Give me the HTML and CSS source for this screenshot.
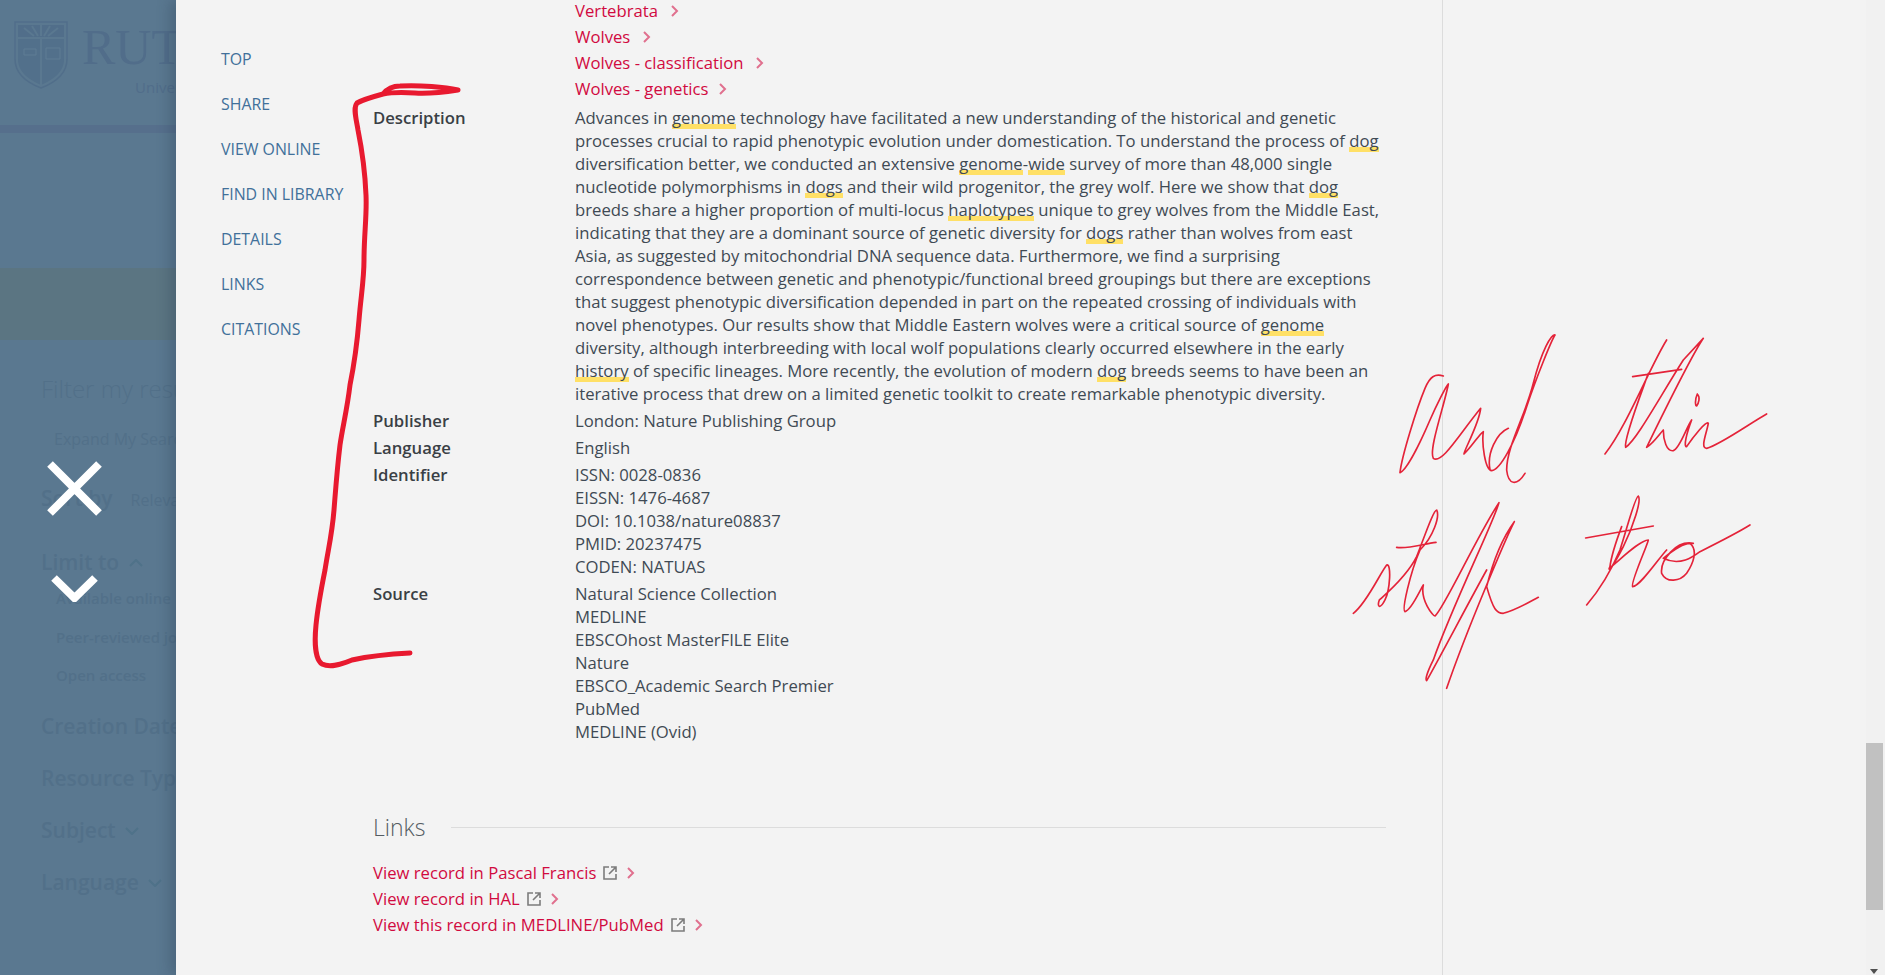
FILE: index.html
```html
<!DOCTYPE html>
<html lang="en">
<head>
    <meta charset="UTF-8">
    <meta name="viewport" content="width=device-width, initial-scale=1.0">
    <title>Record details</title>
    <link rel="stylesheet" href="styles.css">
</head>
<body>

<div class="page">
    <!-- dimmed results page behind the panel -->
    <div class="backdrop">
        <div class="brand">
            <svg class="shield" viewBox="0 0 54 68" width="54" height="68">
                <path d="M1 1H53V38C53 54 40 62 27 67C14 62 1 54 1 38Z" fill="none" stroke="#516e8a" stroke-width="1.5"/>
                <path d="M4 4H50V16H4Z" fill="#516e8a"/>
                <path d="M4 18H50V38C50 52 38 59 27 64C16 59 4 52 4 38Z" fill="#52708b"/>
                <path d="M27 18V64" stroke="#5a7890" stroke-width="2"/>
                <path d="M10 7L20 15M18 5L24 15M27 4V15M36 5L30 15M44 7L34 15" stroke="#5a7890" stroke-width="2"/>
                <path d="M10 28H22V34H10ZM32 27H46V38H32Z" fill="none" stroke="#5f7d94"/>
            </svg>
            <div class="brand-text">
                <div class="brand-name">Rutgers</div>
                <div class="brand-sub">University Libraries</div>
            </div>
        </div>
        <div class="band"></div>
        <div class="hero"></div>
        <div class="filters">
            <div class="filter-title">Filter my results</div>
            <div class="filter-expand"><span class="toggle"></span>Expand My Search</div>
            <div class="filter-sort"><b>Sort by</b><span>Relevance</span></div>
            <div class="filter-head limit">Limit to
                <svg viewBox="0 0 14 8" width="14" height="8"><path d="M1 7L7 1L13 7" fill="none" stroke="#4f7289" stroke-width="2"/></svg>
            </div>
            <div class="filter-item">Available online</div>
            <div class="filter-item">Peer-reviewed journals</div>
            <div class="filter-item">Open access</div>
            <div class="filter-head first">Creation Date</div>
            <div class="filter-head">Resource Type</div>
            <div class="filter-head">Subject
                <svg viewBox="0 0 14 8" width="14" height="8"><path d="M1 1L7 7L13 1" fill="none" stroke="#4f7289" stroke-width="2"/></svg>
            </div>
            <div class="filter-head">Language
                <svg viewBox="0 0 14 8" width="14" height="8"><path d="M1 1L7 7L13 1" fill="none" stroke="#4f7289" stroke-width="2"/></svg>
            </div>
        </div>
    </div>

    <div class="panel">
        <nav class="side-nav">
            <a href="#">TOP</a>
            <a href="#">SHARE</a>
            <a href="#">VIEW ONLINE</a>
            <a href="#">FIND IN LIBRARY</a>
            <a href="#">DETAILS</a>
            <a href="#">LINKS</a>
            <a href="#">CITATIONS</a>
        </nav>

        <main class="record">
            <div class="row subjects">
                <div class="label"></div>
                <div class="links">
                    <a href="#">Vertebrata<svg class="chev gap" viewBox="0 0 9 12"><path d="M2 1L7 6L2 11"/></svg></a>
                    <a href="#">Wolves<svg class="chev gap" viewBox="0 0 9 12"><path d="M2 1L7 6L2 11"/></svg></a>
                    <a href="#">Wolves - classification<svg class="chev gap" viewBox="0 0 9 12"><path d="M2 1L7 6L2 11"/></svg></a>
                    <a href="#">Wolves - genetics<svg class="chev" viewBox="0 0 9 12"><path d="M2 1L7 6L2 11"/></svg></a>
                </div>
            </div>

            <div class="row">
                <div class="label">Description</div>
                <div class="lines">
                    <span>Advances in <mark>genome</mark> technology have facilitated a new understanding of the historical and genetic</span>
                    <span>processes crucial to rapid phenotypic evolution under domestication. To understand the process of <mark>dog</mark></span>
                    <span>diversification better, we conducted an extensive <mark>genome</mark>-<mark>wide</mark> survey of more than 48,000 single</span>
                    <span>nucleotide polymorphisms in <mark>dogs</mark> and their wild progenitor, the grey wolf. Here we show that <mark>dog</mark></span>
                    <span>breeds share a higher proportion of multi-locus <mark>haplotypes</mark> unique to grey wolves from the Middle East,</span>
                    <span>indicating that they are a dominant source of genetic diversity for <mark>dogs</mark> rather than wolves from east</span>
                    <span>Asia, as suggested by mitochondrial DNA sequence data. Furthermore, we find a surprising</span>
                    <span>correspondence between genetic and phenotypic/functional breed groupings but there are exceptions</span>
                    <span>that suggest phenotypic diversification depended in part on the repeated crossing of individuals with</span>
                    <span>novel phenotypes. Our results show that Middle Eastern wolves were a critical source of <mark>genome</mark></span>
                    <span>diversity, although interbreeding with local wolf populations clearly occurred elsewhere in the early</span>
                    <span><mark>history</mark> of specific lineages. More recently, the evolution of modern <mark>dog</mark> breeds seems to have been an</span>
                    <span>iterative process that drew on a limited genetic toolkit to create remarkable phenotypic diversity.</span>
                </div>
            </div>

            <div class="row">
                <div class="label">Publisher</div>
                <div class="lines"><span>London: Nature Publishing Group</span></div>
            </div>
            <div class="row">
                <div class="label">Language</div>
                <div class="lines"><span>English</span></div>
            </div>
            <div class="row">
                <div class="label">Identifier</div>
                <div class="lines">
                    <span>ISSN: 0028-0836</span>
                    <span>EISSN: 1476-4687</span>
                    <span>DOI: 10.1038/nature08837</span>
                    <span>PMID: 20237475</span>
                    <span>CODEN: NATUAS</span>
                </div>
            </div>
            <div class="row">
                <div class="label">Source</div>
                <div class="lines">
                    <span>Natural Science Collection</span>
                    <span>MEDLINE</span>
                    <span>EBSCOhost MasterFILE Elite</span>
                    <span>Nature</span>
                    <span>EBSCO_Academic Search Premier</span>
                    <span>PubMed</span>
                    <span>MEDLINE (Ovid)</span>
                </div>
            </div>

            <div class="section-head">
                <h2>Links</h2>
                <div class="section-rule"></div>
            </div>
            <div class="links">
                <a href="#">View record in Pascal Francis<svg class="ext" viewBox="0 0 14 14"><path d="M6 1H1V13H13V8M8 1H13V6M13 1L6 8"/></svg><svg class="chev" viewBox="0 0 9 12"><path d="M2 1L7 6L2 11"/></svg></a>
                <a href="#">View record in HAL<svg class="ext" viewBox="0 0 14 14"><path d="M6 1H1V13H13V8M8 1H13V6M13 1L6 8"/></svg><svg class="chev" viewBox="0 0 9 12"><path d="M2 1L7 6L2 11"/></svg></a>
                <a href="#">View this record in MEDLINE/PubMed<svg class="ext" viewBox="0 0 14 14"><path d="M6 1H1V13H13V8M8 1H13V6M13 1L6 8"/></svg><svg class="chev" viewBox="0 0 9 12"><path d="M2 1L7 6L2 11"/></svg></a>
            </div>
        </main>

        <div class="margin-col"></div>

        <div class="scrollbar">
            <div class="scroll-thumb"></div>
            <div class="scroll-arrow"></div>
        </div>
    </div>

    <!-- close and next buttons sit on the dimmed area -->
    <div class="overlay-btns">
        <svg viewBox="0 0 55 55" width="55" height="55"><path d="M3 3L52 52M52 3L3 52" stroke="#fff" stroke-width="8" fill="none"/></svg>
        <svg class="next" viewBox="0 0 47 27" width="47" height="27"><path d="M3 3L23.5 23L44 3" stroke="#fff" stroke-width="8" fill="none"/></svg>
    </div>

    <!-- pen marks drawn over the page -->
    <svg class="ink" viewBox="0 0 1885 975" width="1885" height="975">
        <path class="bracket" d="M458 90C445 92 432 94 415 93C400 92 388 93 383 94C387 89 392 86 400 86C420 85 445 87 458 90M383 94C372 97 362 100 357 103C353 108 356 118 358 130C362 150 365 170 366 195C367 215 364 235 364 260C364 280 361 295 359 320C357 345 354 365 350 385C347 410 343 425 340 445C337 470 336 485 334 510C332 535 328 550 325 570C321 590 318 605 316 625C314 645 316 660 322 664C330 668 340 665 352 660C370 656 390 654 410 653"/>
        <g class="pen" transform="translate(1320 310) scale(0.3333)">
            <path d="M370 198C345 190 330 200 315 235C290 295 245 440 240 488C260 480 300 400 330 330C350 285 380 225 385 222C375 280 325 420 340 445C365 465 420 370 482 295C478 340 430 425 432 432C455 410 480 370 490 365C485 400 495 480 515 482C540 480 585 400 620 290C650 200 695 90 705 75C695 70 665 120 640 220C615 320 560 410 560 480C565 525 590 530 615 490M565 355C530 370 500 430 510 478"/>
            <path d="M1040 90C990 170 920 350 855 432M938 200L1085 178M985 190C960 260 910 390 917 412C950 390 1020 260 1090 150L1150 85C1120 130 1020 330 980 412C1000 400 1020 370 1030 360C1030 390 1040 425 1060 422C1080 415 1100 350 1115 330C1100 370 1090 410 1100 410C1120 380 1160 330 1165 340C1160 370 1140 415 1160 415C1200 405 1290 340 1340 312M1132 252C1124 270 1126 288 1130 288C1136 280 1142 262 1132 252"/>
            <path d="M100 910C140 880 180 790 200 765C215 760 210 840 195 870C180 900 170 890 178 870C200 850 260 800 290 740C310 690 340 600 350 600C360 620 340 680 300 720C270 790 245 900 255 905C275 900 300 840 310 825C300 870 340 920 345 918C370 900 470 680 537 578C520 640 400 880 340 1050C320 1090 315 1110 320 1112C350 1060 450 870 500 780M583 635C560 680 440 960 380 1135M583 635C550 680 520 750 500 830C520 900 530 910 550 910C590 900 630 875 655 862M230 712C260 718 310 702 348 697"/>
            <path d="M800 885C830 850 870 790 900 720C920 660 945 560 955 558C965 570 940 650 910 710C880 770 860 790 870 770C875 730 890 690 905 650M797 684L1000 648M868 775C900 750 960 690 985 690C985 700 930 820 938 830C960 830 1020 740 1040 720M1120 700C1070 690 1020 750 1025 790C1040 820 1080 815 1100 790C1120 760 1135 720 1110 700C1090 700 1060 720 1030 745C1080 770 1120 740 1140 725C1190 700 1250 670 1290 645"/>
        </g>
    </svg>
</div>

</body>
</html>
```

FILE: styles.css
```css
html, body {
    margin: 0;
    height: 975px;
    overflow: hidden;
}
body {
    font-family: "Open Sans", "Noto Sans", sans-serif;
    font-size: 16px;
    color: #3f4a54;
    background-color: #f3f3f3;
}
a {
    color: inherit;
    text-decoration: none;
}
.page {
    position: relative;
    display: flex;
    width: 1885px;
    height: 975px;
    overflow: hidden;
}

/* dimmed page */
.backdrop {
    width: 176px;
    flex: none;
    overflow: hidden;
    background-color: #5a7890;
    color: #527089;
    white-space: nowrap;
}
.brand {
    display: flex;
    gap: 14px;
    height: 125px;
    box-sizing: border-box;
    padding: 21px 0 0 14px;
}
.shield {
    flex: none;
}
.brand-name {
    font-family: "Liberation Serif", serif;
    font-size: 50px;
    line-height: 52px;
    text-transform: uppercase;
    color: #516d8a;
}
.brand-sub {
    margin-top: 4px;
    padding-left: 53px;
    font-size: 15px;
    color: #516d8a;
}
.band {
    height: 8px;
    background-color: #566f8c;
}
.hero {
    height: 135px;
}
.hero + .filters {
    border-top: 72px solid #5b7582;
}
.filters {
    padding: 29px 0 0 41px;
}
.filter-title {
    font-size: 24px;
    line-height: 40px;
    font-weight: 300;
}
.filter-expand {
    display: flex;
    align-items: center;
    gap: 16px;
    height: 30px;
    margin-top: 15px;
}
.toggle {
    width: 24px;
    height: 18px;
    margin-left: -3px;
    border-radius: 9px;
    background-color: #57758d;
}
.filter-sort {
    display: flex;
    align-items: baseline;
    gap: 18px;
    height: 34px;
    margin-top: 30px;
    font-size: 16px;
}
.filter-sort b {
    font-size: 21px;
    font-weight: 600;
}
.filter-head {
    height: 52px;
    line-height: 34px;
    font-size: 21px;
    font-weight: 600;
}
.filter-head svg {
    margin-left: 4px;
    vertical-align: 3px;
}
.limit {
    height: 34px;
    margin-top: 27px;
}
.first {
    margin-top: 14px;
}
.filter-item {
    height: 38.5px;
    line-height: 38.5px;
    padding-left: 15px;
    font-weight: 600;
    font-size: 15px;
}

/* panel */
.panel {
    display: flex;
    flex: 1;
    min-width: 0;
    background-color: #f3f3f3;
    box-shadow: -6px 0 12px rgba(40, 60, 80, 0.3);
    z-index: 1;
}
.side-nav {
    display: flex;
    flex-direction: column;
    flex: none;
    gap: 22px;
    width: 152px;
    padding: 48px 0 0 45px;
}
.side-nav a {
    line-height: 23px;
    font-size: 15.9px;
    color: #41709a;
    white-space: nowrap;
}

.record {
    flex: none;
    width: 1013px;
    margin-top: -3px;
    font-size: 16.7px;
}
.row {
    display: grid;
    grid-template-columns: 202px 1fr;
    margin-bottom: 4px;
}
.subjects {
    margin-bottom: 5px;
}
.label {
    line-height: 23px;
    font-weight: 600;
    color: #3a3f45;
}
.lines span {
    display: block;
    line-height: 23px;
    white-space: nowrap;
}
mark {
    color: inherit;
    background: linear-gradient(#ffe066, #ffe066) no-repeat left bottom / 100% 5px;
}
.links a {
    display: flex;
    align-items: center;
    height: 26px;
    color: #d10a3f;
    white-space: nowrap;
}
.chev {
    width: 9px;
    height: 12px;
    margin: 2px 0 0 9px;
    fill: none;
    stroke: #e0708e;
    stroke-width: 2;
}
.chev.gap {
    margin-left: 12px;
}
.ext {
    width: 14px;
    height: 14px;
    margin: 2px 0 0 7px;
    fill: none;
    stroke: #7c7c7c;
    stroke-width: 1.6;
}
.section-head {
    display: flex;
    align-items: center;
    gap: 26px;
    height: 32px;
    margin: 68px 0 16px;
}
.section-head h2 {
    margin: 0;
    font-size: 23px;
    font-weight: 300;
    color: #555c62;
}
.section-rule {
    flex: 1;
    height: 1px;
    background-color: #dcdcdc;
}

.margin-col {
    flex: 1;
    margin-left: 56px;
    border-left: 1px solid #dcdcdc;
}
.scrollbar {
    position: relative;
    flex: none;
    width: 19px;
    background-color: #f1f1f1;
}
.scroll-thumb {
    width: 17px;
    height: 167px;
    margin-top: 743px;
    background-color: #c1c1c1;
}
.scroll-arrow {
    width: 0;
    margin: 59px 0 0 4px;
    border-top: 5px solid #505050;
    border-left: 4.5px solid transparent;
    border-right: 4.5px solid transparent;
}

/* overlays */
.overlay-btns {
    position: absolute;
    left: 47px;
    top: 461px;
    z-index: 2;
}
.overlay-btns svg {
    display: block;
}
.overlay-btns .next {
    margin: 59px 0 0 4px;
}
.ink {
    position: absolute;
    left: 0;
    top: 0;
    z-index: 3;
    pointer-events: none;
}
.bracket {
    fill: none;
    stroke: #e8192f;
    stroke-width: 5;
    stroke-linecap: round;
    stroke-linejoin: round;
}
.pen path {
    fill: none;
    stroke: #e42339;
    stroke-width: 5;
    stroke-linecap: round;
    stroke-linejoin: round;
}
```
